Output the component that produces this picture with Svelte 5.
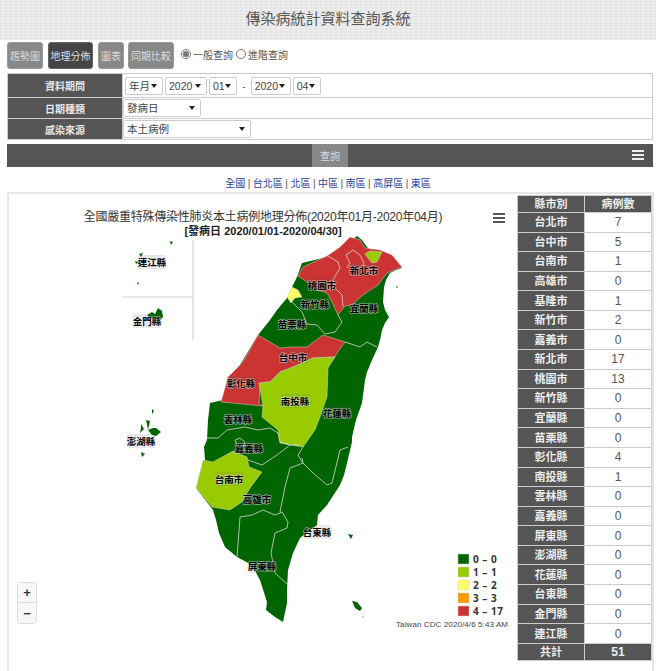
<script>
	const tabs = [
		{ label: '趨勢圖', active: false },
		{ label: '地理分佈', active: true },
		{ label: '圖表', active: false },
		{ label: '同期比較', active: false }
	];

	const areas = ['全國', '台北區', '北區', '中區', '南區', '高屏區', '東區'];

	const rows = [
		['台北市', 7], ['台中市', 5], ['台南市', 1], ['高雄市', 0], ['基隆市', 1], ['新竹市', 2],
		['嘉義市', 0], ['新北市', 17], ['桃園市', 13], ['新竹縣', 0], ['宜蘭縣', 0], ['苗栗縣', 0],
		['彰化縣', 4], ['南投縣', 1], ['雲林縣', 0], ['嘉義縣', 0], ['屏東縣', 0], ['澎湖縣', 0],
		['花蓮縣', 0], ['台東縣', 0], ['金門縣', 0], ['連江縣', 0]
	];

	const GREEN = '#006400';
	const LIME = '#99cc00';
	const YELLOW = '#ffff66';
	const RED = '#cc3333';

	// map shapes, in page coordinates (the svg viewBox is offset to match)
	const island =
		'M357 236 L362 240 367 247 372 252 383 254 393 258 402 268 396 270 390 273 386 280 384 287 383 302 385 310 389 317 385 323 382 330 380 340 378 347 372 360 367 372 365 380 362 403 356 420 352 437 352 442 347 463 344 475 340 485 327 505 318 515 317 525 300 538 293 553 288 570 287 590 287 603 283 622 275 617 266 610 267 602 260 580 252 565 237 557 225 547 219 533 216 520 213 510 196 488 205 460 204 447 207 440 208 420 210 403 223 400 230 380 243 360 258 335 270 320 277 310 287 298 293 285 297 277 302 263 327 257 343 247Z';

	const regions = [
		{
			color: RED,
			d: 'M298 276 L303 267 327 256 340 247 350 237 360 240 365 248 380 250 392 255 402 267 387 273 378 285 363 295 352 305 345 306 338 315 332 302 327 293 317 290 307 282Z'
		},
		{ color: LIME, d: 'M365 254 L370 251 382 252 377 262 372 263Z' },
		{ color: YELLOW, d: 'M292 287 L298 290 302 297 295 298 291 303 287 297Z' },
		{
			color: RED,
			d: 'M258 335 L280 348 293 347 307 347 323 335 345 342 337 353 335 357 313 358 293 367 280 372 270 382 260 383 259 403 263 406 221 402 228 377 243 362Z'
		},
		{
			color: LIME,
			d: 'M335 357 L328 368 327 397 320 417 315 430 303 447 280 443 278 430 262 417 263 406 259 383 270 382 280 372 293 367 313 358Z'
		},
		{
			color: LIME,
			d: 'M233 451 L247 457 249 467 262 472 250 488 242 502 230 510 212 507 196 488 203 460 213 462Z'
		}
	];

	const borders = [
		'M346 255 L353 250 360 255 364 263 362 267',
		'M346 255 L350 263 347 268',
		'M328 256 L338 262 340 268 333 280 335 288 342 295 343 307',
		'M338 315 L342 322 335 332 325 334',
		'M290 300 L302 312 307 324 317 325 325 334',
		'M345 342 L360 347 367 342 377 347',
		'M207 438 L218 438 227 430 245 427 258 430 270 428 278 433 280 442 290 445 300 445',
		'M290 445 L277 455 262 465 248 460',
		'M235 440 L240 438 245 442 243 447 237 445Z',
		'M237 557 L240 517 252 515 263 510 275 515 282 512 288 522 287 528 275 533 271 553 275 573 287 584',
		'M303 463 L290 468 285 487 280 512',
		'M302 458 L303 463 313 473 327 485 332 483 340 450 348 447',
		'M303 447 L298 455 302 462'
	];

	const islets = [
		'M147 315 L152 312 155 314 158 308 162 311 163 317 160 320 155 318 150 318Z',
		'M135 261 L139 262 136 264Z',
		'M139 254 L143 253 141 257Z',
		'M170 241 L173 242 171 245Z',
		'M137 283 L139 282 138 285Z',
		'M152 409 L154 411 152 414Z',
		'M148 430 L153 428 156 428 161 432 156 436 152 435Z',
		'M146 420 L150 421 148 430 147 424Z',
		'M141 424 L144 429 140 433 141 428Z',
		'M141 452 L145 454 142 457Z',
		'M348 534 L353 535 351 539Z',
		'M352 601 L357 602 362 608 360 611 355 608Z'
	];

	const labels = [
		['連江縣', 152, 262], ['金門縣', 147, 321], ['澎湖縣', 141, 441], ['新北市', 364, 270],
		['桃園市', 322, 285], ['新竹縣', 315, 304], ['宜蘭縣', 364, 308], ['苗栗縣', 292, 324],
		['台中市', 293, 357], ['彰化縣', 241, 383], ['南投縣', 295, 401], ['花蓮縣', 337, 413],
		['雲林縣', 238, 419], ['嘉義縣', 249, 448], ['台南市', 229, 479], ['高雄市', 257, 499],
		['台東縣', 317, 532], ['屏東縣', 262, 566]
	];

	const legend = [
		[GREEN, '0 – 0'], [LIME, '1 – 1'], [YELLOW, '2 – 2'], ['#ff9900', '3 – 3'], [RED, '4 – 17']
	];
</script>

<header class="top">傳染病統計資料查詢系統</header>

<nav class="tabs">
	{#each tabs as tab}
		<button class="tab" class:active={tab.active}>{tab.label}</button>
	{/each}
	<label class="radio"><input type="radio" name="mode" checked />一般查詢</label>
	<label class="radio"><input type="radio" name="mode" />進階查詢</label>
</nav>

<table class="filters">
	<tbody>
		<tr class="first">
			<th>資料期間</th>
			<td>
				<div class="inline">
					<span class="sel w38"><select><option>年月</option></select></span>
					<span class="sel w42"><select><option>2020</option></select></span>
					<span class="sel w28"><select><option>01</option></select></span>
					<span class="dash">-</span>
					<span class="sel w40"><select><option>2020</option></select></span>
					<span class="sel w28"><select><option>04</option></select></span>
				</div>
			</td>
		</tr>
		<tr>
			<th>日期種類</th>
			<td><span class="sel w78"><select><option>發病日</option></select></span></td>
		</tr>
		<tr>
			<th>感染來源</th>
			<td><span class="sel w128"><select><option>本土病例</option></select></span></td>
		</tr>
	</tbody>
</table>

<div class="querybar">
	<button class="query">查詢</button>
	<span class="burger light"><i></i><i></i><i></i></span>
</div>

<p class="areas">
	{#each areas as area, i}
		{#if i > 0}<span class="sep">|</span>{/if}<a href="#top">{area}</a>
	{/each}
</p>

<section class="panel">
	<div class="chart">
		<svg class="map" viewBox="9 195 508 468" aria-hidden="true">
			<path d="M123 297 H193 M193 240 V340" class="guide" />
			<path d={island} fill={GREEN} />
			{#each regions as r}
				<path d={r.d} fill={r.color} class="county" />
			{/each}
			{#each borders as d}
				<path {d} class="border" />
			{/each}
			{#each islets as d}
				<path {d} fill={GREEN} />
			{/each}
			<circle cx="397" cy="287" r="1" fill="#6a9a6a" />
			<circle cx="363" cy="617" r="0.8" fill="#999" />
			{#each labels as [name, x, y]}
				<rect x={x - 14.5} y={y - 7} width="29" height="14" rx="3" class="chip" />
				<text {x} y={y + 3.5} class="region">{name}</text>
			{/each}
			{#each legend as [color, range], i}
				<rect x="458" y={554 + i * 13} width="11" height="10" fill={color} stroke="#ccc" stroke-width="0.5" />
				<text x="473" y={563 + i * 13} class="range">{range}</text>
			{/each}
			<text x="396" y="627" class="credit">Taiwan CDC 2020/4/6 5:43 AM</text>
		</svg>
		<h2 class="title">全國嚴重特殊傳染性肺炎本土病例地理分佈(2020年01月-2020年04月)</h2>
		<h3 class="subtitle">[發病日 2020/01/01-2020/04/30]</h3>
		<span class="burger dark"><i></i><i></i><i></i></span>
		<div class="zoom">
			<button>+</button>
			<button>−</button>
		</div>
	</div>

	<table class="counts">
		<thead>
			<tr><th>縣市別</th><th>病例數</th></tr>
		</thead>
		<tbody>
			{#each rows as [name, count]}
				<tr><th>{name}</th><td>{count}</td></tr>
			{/each}
		</tbody>
		<tfoot>
			<tr><th>共計</th><th>51</th></tr>
		</tfoot>
	</table>
</section>

<style>
	:global(body) {
		background: #fff;
		font-family: 'Liberation Sans', 'Noto Sans CJK TC', sans-serif;
		color: #555;
		overflow: hidden;
	}

	.top {
		height: 40px;
		line-height: 38px;
		text-align: center;
		font-size: 15px;
		color: #555;
		background-color: #e8e8e8;
		background-image:
			repeating-linear-gradient(0deg, rgba(255, 255, 255, 0.35) 0 1px, transparent 1px 3px),
			repeating-linear-gradient(90deg, rgba(0, 0, 0, 0.02) 0 2px, transparent 2px 5px);
	}

	.tabs {
		display: flex;
		align-items: flex-start;
		margin: 2px 0 0 7px;
		height: 27px;
		font-size: 10px;
	}

	.tab {
		height: 27px;
		margin-right: 5px;
		padding: 0 2px;
		border: 1px solid #999;
		border-radius: 3px;
		background: #888;
		color: #ddd;
		font: inherit;
	}

	.tab.active {
		background: #444;
		border-color: #666;
		padding: 0 1.5px;
	}

	.tab:nth-of-type(3) {
		margin-right: 4px;
	}

	.tab:last-of-type {
		margin-right: 6px;
	}

	.radio {
		display: flex;
		align-items: center;
		height: 24px;
		margin-right: 2px;
		color: #555;
	}

	.radio input {
		width: 10px;
		height: 10px;
		margin: 0 2px 0 1px;
		accent-color: #777;
	}

	.filters {
		width: 646px;
		margin: 4px 0 0 7px;
		border-collapse: collapse;
		font-size: 10px;
	}

	.filters th {
		width: 114px;
		background: #555;
		color: #e8e8e8;
		border: 1px solid #ccc;
		font-weight: bold;
		padding: 0;
	}

	.filters td {
		border: 1px solid #ccc;
		padding: 0;
		height: 20px;
		vertical-align: middle;
	}

	.filters tr.first td {
		height: 23px;
		padding-left: 2px;
	}

	.inline {
		display: flex;
		align-items: center;
		gap: 2px;
	}

	.dash {
		margin: 0 3px;
		color: #666;
		font-size: 11px;
	}

	.sel {
		position: relative;
		display: block;
		height: 18px;
	}

	.sel::after {
		content: '';
		position: absolute;
		right: 6px;
		top: 7px;
		border: 3px solid transparent;
		border-top: 4px solid #222;
		border-bottom: 0;
	}

	.sel select {
		appearance: none;
		display: block;
		width: 100%;
		height: 100%;
		padding: 0 0 0 3px;
		border: 1px solid #ccc;
		border-radius: 2px;
		background: #fff;
		color: #444;
		font: inherit;
		font-size: 10.5px;
	}

	.w38 { width: 38px; }
	.w42 { width: 42px; }
	.w40 { width: 40px; }
	.w28 { width: 28px; }
	.w78 { width: 78px; }
	.w128 { width: 128px; }

	.querybar {
		position: relative;
		display: flex;
		justify-content: center;
		width: 646px;
		height: 23px;
		margin: 4px 0 0 7px;
		background: #555;
	}

	.query {
		width: 36px;
		border: 0;
		background: #888;
		color: #ddd;
		font: inherit;
		font-size: 10px;
	}

	.burger {
		position: absolute;
		display: flex;
		flex-direction: column;
		justify-content: space-between;
		width: 12px;
		height: 10px;
	}

	.burger i {
		height: 2px;
		background: #eee;
	}

	.burger.light {
		right: 9px;
		top: 6px;
	}

	.burger.dark {
		right: 12px;
		top: 18px;
	}

	.burger.dark i {
		background: #555;
	}

	.areas {
		margin: 9px 0 0;
		height: 15px;
		line-height: 15px;
		text-align: center;
		font-size: 10px;
	}

	.areas a {
		color: #2a3fa0;
		text-decoration: none;
	}

	.sep {
		margin: 0 2.5px;
		color: #555;
	}

	.panel {
		display: flex;
		align-items: flex-start;
		margin: 1px 2px 0 7px;
		padding-top: 1px;
		border: 2px solid #e6e6e6;
		border-bottom: 0;
		height: 490px;
	}

	.chart {
		position: relative;
		flex: none;
		width: 508px;
		height: 468px;
	}

	.map {
		position: absolute;
		inset: 0;
		width: 508px;
		height: 468px;
	}

	.guide {
		fill: none;
		stroke: #ccc;
		stroke-width: 1;
	}

	.county {
		stroke: #d8d8d8;
		stroke-width: 0.5;
	}

	.border {
		fill: none;
		stroke: #d8d8d8;
		stroke-width: 0.8;
	}

	.chip {
		fill: rgba(90, 90, 90, 0.14);
	}

	.region {
		font-size: 9.5px;
		font-weight: bold;
		text-anchor: middle;
		fill: #000;
		stroke: rgba(255, 255, 255, 0.55);
		stroke-width: 1.2px;
		paint-order: stroke;
	}

	.range {
		font-size: 10px;
		font-weight: bold;
		fill: #333;
		font-family: 'Open Sans', sans-serif;
		letter-spacing: 0.5px;
	}

	.credit {
		font-size: 8px;
		fill: #444;
		font-family: 'Liberation Sans', sans-serif;
		letter-spacing: 0.1px;
	}

	.title,
	.subtitle {
		position: relative;
		margin: 0;
		text-align: center;
		font-weight: normal;
		color: #333;
	}

	.title {
		padding-top: 15px;
		font-size: 12px;
		line-height: 14px;
		letter-spacing: -0.25px;
	}

	.subtitle {
		font-size: 11px;
		line-height: 14px;
		font-weight: bold;
		color: #222;
	}

	.zoom {
		position: absolute;
		left: 8px;
		top: 387px;
		display: flex;
		flex-direction: column;
		border: 1px solid #ddd;
		border-radius: 3px;
	}

	.zoom button {
		width: 18px;
		height: 20px;
		padding: 0;
		border: 0;
		background: #f7f7f7;
		color: #333;
		font: bold 13px 'Liberation Sans', sans-serif;
	}

	.zoom button:first-child {
		border-bottom: 1px solid #ddd;
	}

	.counts {
		flex: none;
		width: 135px;
		height: 466px;
		border-collapse: collapse;
		font-size: 12px;
		line-height: 12px;
		table-layout: fixed;
	}

	.counts th,
	.counts td {
		padding: 0;
		height: 16px;
		border: 1px solid #ccc;
		text-align: center;
	}

	.counts th {
		background: #555;
		color: #eee;
		font-weight: bold;
		font-size: 11px;
	}

	.counts td {
		background: #fff;
		color: #555;
		font-size: 12px;
	}

	.counts tfoot th:last-child {
		font-size: 12px;
	}
</style>
